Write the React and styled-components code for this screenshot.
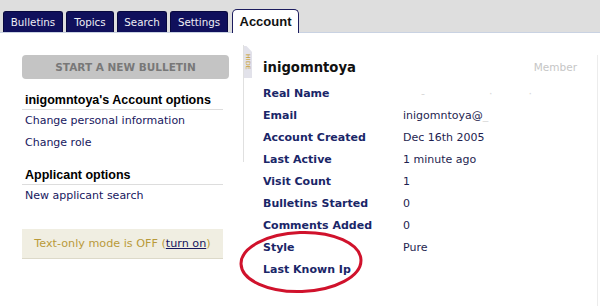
import React from "react";
import styled, { createGlobalStyle } from "styled-components";

const Global = createGlobalStyle`
  html, body { margin: 0; padding: 0; background: #fff; }
  body { font-family: "DejaVu Sans", Verdana, sans-serif; }
  * { box-sizing: border-box; }
`;

const Page = styled.div`
  position: relative;
  width: 600px;
  height: 306px;
  overflow: hidden;
  background: #fff;
`;

const TabBar = styled.div`
  height: 33px;
  background: #dedede;
  border-bottom: 1px solid #c9d2e2;
  display: flex;
  align-items: flex-end;
  gap: 3px;
  padding-left: 3px;
`;

const Tab = styled.div`
  width: ${(p) => p.$w}px;
  height: 21px;
  background: #10105c;
  border: 1px solid #08083e;
  border-bottom: none;
  border-radius: 3px 3px 0 0;
  color: #eeeef4;
  font-size: 10.3px;
  display: flex;
  align-items: center;
  justify-content: center;
`;

const ActiveTab = styled.div`
  width: ${(p) => p.$w}px;
  height: 24px;
  margin-bottom: -1px;
  margin-left: 1px;
  background: #fff;
  border: 1px solid #1c1c5e;
  border-bottom: none;
  border-radius: 5px 5px 0 0;
  color: #111;
  font-family: "Liberation Sans", Arial, sans-serif;
  font-weight: bold;
  font-size: 13px;
  display: flex;
  align-items: center;
  justify-content: center;
`;

const Main = styled.div`
  display: flex;
  align-items: flex-start;
`;

const Sidebar = styled.div`
  width: 229px;
  padding-left: 22px;
  padding-top: 22px;
  flex-shrink: 0;
`;

const NewButton = styled.div`
  width: 207px;
  height: 24px;
  background: #c4c4c4;
  border-radius: 4px;
  color: #787878;
  font-weight: bold;
  font-size: 10.5px;
  display: flex;
  align-items: center;
  justify-content: center;
`;

const SectionTitle = styled.div`
  width: 201px;
  margin-top: ${(p) => p.$mt}px;
  height: 19px;
  line-height: 18px;
  padding-left: 3px;
  border-bottom: 1px solid #dddddd;
  color: #000;
  font-family: "Liberation Sans", Arial, sans-serif;
  font-weight: bold;
  font-size: 12.5px;
  white-space: nowrap;
`;

const SideLink = styled.div`
  height: 22px;
  line-height: 22px;
  padding-left: 3px;
  color: #17175e;
  font-size: 11px;
`;

const TextOnly = styled.div`
  width: 201px;
  height: 30px;
  margin-top: 22px;
  background: #f0eee2;
  border-bottom: 1px solid #dcd9c9;
  color: #b99a3a;
  font-size: 11.2px;
  display: flex;
  align-items: center;
  justify-content: center;
`;

const TurnOn = styled.span`
  color: #17175e;
  text-decoration: underline;
`;

const Divider = styled.div`
  display: flex;
  margin-left: 14px;
  margin-top: 12px;
  flex-shrink: 0;
`;

const DividerLine = styled.div`
  width: 1px;
  height: 117px;
  background: #e0e0e0;
`;

const HideTab = styled.div`
  width: 8px;
  height: 32px;
  margin-top: 1px;
  background: #e2e2ea;
  clip-path: polygon(0 0, 30% 0, 100% 18%, 100% 100%, 0 100%);
  display: flex;
  align-items: center;
  justify-content: center;
`;

const HideText = styled.span`
  writing-mode: vertical-rl;
  font-size: 6px;
  letter-spacing: 0.3px;
  color: #c8a030;
  font-family: "DejaVu Sans", sans-serif;
`;

const Content = styled.div`
  flex: 1;
  margin-left: 11px;
  margin-right: 2px;
  margin-top: 22px;
  height: 251px;
  border-right: 1px solid #ececec;
  padding-right: 20px;
`;

const Header = styled.div`
  display: flex;
  justify-content: space-between;
  align-items: center;
  height: 20px;
  margin-top: 2px;
`;

const UserName = styled.div`
  font-weight: bold;
  font-size: 13.2px;
  color: #111;
`;

const Role = styled.div`
  font-size: 10.5px;
  color: #c6c6c6;
`;

const Rows = styled.div`
  margin-top: 5px;
`;

const Row = styled.div`
  display: flex;
  height: 22px;
  align-items: center;
`;

const Label = styled.div`
  width: 140px;
  flex-shrink: 0;
  font-weight: bold;
  font-size: 11px;
  color: #1a2668;
`;

const Value = styled.div`
  font-size: 11px;
  color: #1e1e50;
  white-space: nowrap;
`;

const Faint = styled.span`
  color: #d8d8d8;
  margin-left: ${(p) => p.$ml || 0}px;
`;

const Annotation = styled.svg`
  position: absolute;
  left: 238px;
  top: 230px;
  overflow: visible;
`;

const tabs = [
  ["Bulletins", 60],
  ["Topics", 48],
  ["Search", 50],
  ["Settings", 58],
];

const rows = [
  ["Real Name", <><Faint $ml={18}>-</Faint><Faint $ml={64}>·</Faint><Faint $ml={36}>·</Faint></>],
  ["Email", <>inigomntoya@<Faint>_</Faint></>],
  ["Account Created", "Dec 16th 2005"],
  ["Last Active", "1 minute ago"],
  ["Visit Count", "1"],
  ["Bulletins Started", "0"],
  ["Comments Added", "0"],
  ["Style", "Pure"],
  ["Last Known Ip", ""],
];

export default function App() {
  return (
    <Page>
      <Global />
      <TabBar>
        {tabs.map(([t, w]) => (
          <Tab key={t} $w={w}>{t}</Tab>
        ))}
        <ActiveTab $w={67}>Account</ActiveTab>
      </TabBar>
      <Main>
        <Sidebar>
          <NewButton>START A NEW BULLETIN</NewButton>
          <SectionTitle $mt={12}>inigomntoya's Account options</SectionTitle>
          <SideLink>Change personal information</SideLink>
          <SideLink>Change role</SideLink>
          <SectionTitle $mt={12}>Applicant options</SectionTitle>
          <SideLink>New applicant search</SideLink>
          <TextOnly>
            Text-only mode is OFF (<TurnOn>turn on</TurnOn>)
          </TextOnly>
        </Sidebar>
        <Divider>
          <DividerLine />
          <HideTab>
            <HideText>HIDE</HideText>
          </HideTab>
        </Divider>
        <Content>
          <Header>
            <UserName>inigomntoya</UserName>
            <Role>Member</Role>
          </Header>
          <Rows>
            {rows.map(([l, v]) => (
              <Row key={l}>
                <Label>{l}</Label>
                <Value>{v}</Value>
              </Row>
            ))}
          </Rows>
        </Content>
      </Main>
      <Annotation width="126" height="64" viewBox="0 0 126 64">
        <ellipse
          cx="63"
          cy="32"
          rx="60"
          ry="29.5"
          fill="none"
          stroke="#d0122c"
          strokeWidth="3"
          transform="rotate(-2 63 32)"
        />
      </Annotation>
    </Page>
  );
}
